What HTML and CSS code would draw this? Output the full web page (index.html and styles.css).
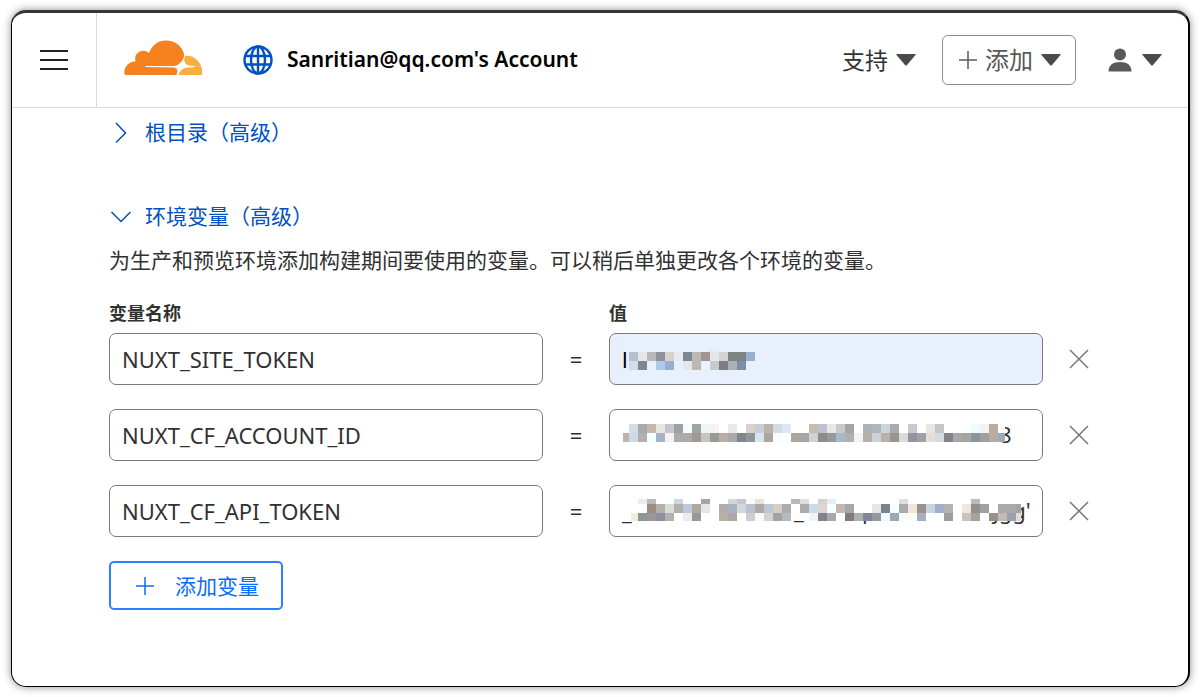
FILE: index.html
```html
<!DOCTYPE html>
<html lang="zh-CN">
<head>
<meta charset="utf-8">
<meta name="viewport" content="width=device-width, initial-scale=1">
<title>环境变量</title>
<link rel="stylesheet" href="styles.css">
</head>
<body>
<div class="window">
  <header class="topbar">
    <button class="menu-button" type="button" aria-label="菜单">
      <svg width="28" height="22" viewBox="0 0 28 22" stroke="#222" stroke-width="2"><path d="M0 2h28M0 11h28M0 20h28"/></svg>
    </button>
    <a class="logo" href="#" aria-label="Cloudflare">
      <svg width="78" height="36" viewBox="0 0 78 36">
        <path fill="#f6821f" d="M1 35C0 34 0 31 1 28.500C3 24 7 21.500 11.500 21.500C10.500 17 12 13.500 15 12C18 10 22 10.500 25 13C28 5 34 .500 42 .500C51 .500 58 6 60 14C60.500 17 59 20 57 22C55 24.500 53 25.500 50 26L21.500 26L21.500 27L50 27.500C53 28 54 30 53 33L52.500 35Z"/>
        <path fill="#fbad41" d="M61 16C69 14.500 76 21 78 29V35H55C55 31 59 28 64 27.500L71 27V26L65 25.500C62 25 61 23 60 20Z"/>
      </svg>
    </a>
    <a class="account" href="#">
      <svg width="30" height="30" viewBox="0 0 30 30" fill="none" stroke="#0051c3" stroke-width="2.400"><circle cx="15" cy="15" r="13.500"/><ellipse cx="15" cy="15" rx="7" ry="13.500"/><path d="M15 1.500v27M2 11h26M2 19.500h26"/></svg>
      <span>Sanritian@qq.com's Account</span>
    </a>
    <nav class="actions">
      <button class="plain-button" type="button"><span>支持</span><svg class="caret" width="20" height="12" viewBox="0 0 20 12"><path d="M1 0h18q1 0 .500 1L11 11q-1 1-2 0L.500 1Q0 0 1 0z"/></svg></button>
      <button class="add-button" type="button"><svg width="18" height="18" viewBox="0 0 18 18" stroke="#595959" stroke-width="1.500"><path d="M9 0v18M0 9h18"/></svg><span>添加</span><svg class="caret" width="20" height="12" viewBox="0 0 20 12"><path d="M1 0h18q1 0 .500 1L11 11q-1 1-2 0L.500 1Q0 0 1 0z"/></svg></button>
      <button class="user-button" type="button" aria-label="用户"><svg width="24" height="24" viewBox="0 0 24 24" fill="#595959"><circle cx="12" cy="6.500" r="6"/><path d="M.500 23.500C.500 17 5 14 12 14S23.500 17 23.500 23.500Z"/></svg><svg class="caret" width="20" height="12" viewBox="0 0 20 12"><path d="M1 0h18q1 0 .500 1L11 11q-1 1-2 0L.500 1Q0 0 1 0z"/></svg></button>
    </nav>
  </header>
  <main class="content">
    <button class="disclosure" type="button" aria-expanded="false">
      <svg width="24" height="24" viewBox="0 0 24 24" fill="none" stroke="#0051c3" stroke-width="1.500"><path d="M7 3l9.500 10L7 22.500"/></svg>
      <span>根目录（高级）</span>
    </button>
    <section>
      <button class="disclosure" type="button" aria-expanded="true">
        <svg width="24" height="24" viewBox="0 0 24 24" fill="none" stroke="#0051c3" stroke-width="1.500"><path d="M2.500 8l9.500 9.500 9.500-9.500"/></svg>
        <span>环境变量（高级）</span>
      </button>
      <p class="description">为生产和预览环境添加构建期间要使用的变量。可以稍后单独更改各个环境的变量。</p>
      <form class="variables">
        <div class="row labels">
          <label for="name-1">变量名称</label><span></span><label for="value-1">值</label>
        </div>
        <div class="row">
          <input class="field" id="name-1" value="NUXT_SITE_TOKEN">
          <span class="equals">=</span>
          <div class="value"><input class="field filled" id="value-1" value="l"><svg class="mosaic" data-row="0" viewBox="0 0 434 52"></svg></div>
          <button class="remove" type="button" aria-label="删除"><svg width="24" height="24" viewBox="0 0 24 24"><path d="M3 3l18 18M21 3L3 21"/></svg></button>
        </div>
        <div class="row">
          <input class="field" aria-label="变量名称" value="NUXT_CF_ACCOUNT_ID">
          <span class="equals">=</span>
          <div class="value"><input class="field" aria-label="值"><svg class="mosaic" data-row="1" viewBox="0 0 434 52"><text x="390" y="34">8</text></svg></div>
          <button class="remove" type="button" aria-label="删除"><svg width="24" height="24" viewBox="0 0 24 24"><path d="M3 3l18 18M21 3L3 21"/></svg></button>
        </div>
        <div class="row">
          <input class="field" aria-label="变量名称" value="NUXT_CF_API_TOKEN">
          <span class="equals">=</span>
          <div class="value"><input class="field" aria-label="值" value="_"><svg class="mosaic" data-row="2" viewBox="0 0 434 52"><text x="185" y="34">_</text><text x="253" y="34">p</text><text x="384" y="34">jgg'</text></svg></div>
          <button class="remove" type="button" aria-label="删除"><svg width="24" height="24" viewBox="0 0 24 24"><path d="M3 3l18 18M21 3L3 21"/></svg></button>
        </div>
        <button class="add-variable" type="button"><svg width="18" height="18" viewBox="0 0 18 18" stroke="#056dff" stroke-width="1.500"><path d="M9 0v18M0 9h18"/></svg><span>添加变量</span></button>
      </form>
    </section>
  </main>
</div>
<script src="mosaic.js"></script>
</body>
</html>
```
FILE: styles.css
```css
* { box-sizing: border-box; }
body {
  margin: 0;
  min-height: 100vh;
  padding: 10px 10px 10px 11px;
  display: flex;
  background: #fff;
  color: #313131;
  font-family: "Noto Sans", "Noto Sans CJK SC", sans-serif;
  font-size: 21px;
  line-height: 32px;
}
button, input { font: inherit; color: inherit; }
button { background: none; border: 0; padding: 0; cursor: pointer; }
a { color: inherit; text-decoration: none; }
svg { display: block; flex: none; }
.window {
  flex: 1;
  min-width: 0;
  border: 1px solid #000;
  border-top: 3px solid #34363d;
  border-right-width: 2px;
  border-radius: 15px;
  background: #fff;
  box-shadow: 0 0 9px rgba(0, 0, 0, .45);
  overflow: hidden;
}
.topbar {
  display: flex;
  align-items: center;
  height: 95px;
  border-bottom: 1px solid #d9d9d9;
}
.menu-button {
  display: flex;
  align-items: center;
  align-self: stretch;
  padding: 0 28px;
  border-right: 1px solid #d9d9d9;
}
.logo { margin: 0 41px 4px 27px; }
.account {
  display: flex;
  align-items: center;
  gap: 14px;
  color: #000;
  font-weight: 600;
  line-height: 28px;
}
.account span { padding-bottom: 2px; }
.actions {
  display: flex;
  align-items: center;
  gap: 26px;
  margin-left: auto;
  padding-right: 26px;
}
.plain-button, .add-button, .user-button { display: flex; align-items: center; gap: 8px; }
.plain-button { font-size: 23px; }
.add-button {
  height: 50px;
  padding: 0 14px 0 16px;
  border: 1px solid #8c8c8c;
  border-radius: 6px;
  color: #595959;
  font-size: 24px;
}
.user-button { padding-left: 6px; gap: 10px; }
.caret { fill: #4a4a4a; }
.content { padding: 8px 97px 48px; }
.disclosure {
  display: flex;
  align-items: center;
  gap: 12px;
  color: #0051c3;
}
section { margin-top: 52px; }
.description { margin: 12px 0 25px; }
.variables { display: flex; flex-direction: column; gap: 24px; }
.row {
  display: grid;
  grid-template-columns: minmax(0, 1fr) 66px minmax(0, 1fr) 48px;
  align-items: center;
}
.labels {
  margin-bottom: -16px;
  font-size: 18px;
  line-height: 24px;
  font-weight: 700;
}
.field {
  display: block;
  width: 100%;
  height: 52px;
  padding: 0 12px;
  border: 1px solid #797979;
  border-radius: 7px;
  background: #fff;
  font-size: 22px;
}
.filled { background: #e8f0fe; color: #000; }
.equals { text-align: center; font-size: 22px; }
.value { position: relative; }
.mosaic {
  position: absolute;
  top: 0;
  left: 0;
  width: 434px;
  height: 52px;
  pointer-events: none;
}
.mosaic text { fill: #313131; font-size: 22px; }
.remove { justify-self: end; }
.remove path { stroke: #777; stroke-width: 1.5; }
.add-variable {
  display: flex;
  align-items: center;
  align-self: flex-start;
  gap: 21px;
  height: 49px;
  padding: 0 22px 0 25px;
  border: 2px solid #2b80ff;
  border-radius: 5px;
  color: #056dff;
}
```
FILE: mosaic.js
```js
// Each strip is a run of 9px cells; "-" leaves a cell clear.
const strips = [
  [
    { x: 20, y: 19, h: 9, c: "b6c0c9 e5e8eb b8b8ba 8d919c dbd0ca e6ebf3 7c8796 bdb8b2 a0958f e2e7ec d4d4d4 7d8283 7d8283 98aeca" },
    { x: 20, y: 28, h: 9, c: "d0dde8 7f8591 - aecaea 98aec9 - e6e7eb bdb8b2 e9f2fd c8c9cd 7d7d88 adb0b5 7b8ea9" },
    { x: 100, y: 16, h: 3, c: "d5f2fc" }
  ],
  [
    { x: 20, y: 15, h: 9, c: "d5dde5 a9aaaa c8b6aa ebe5df c4c5cb 9f9fa4 f0fffe a2a4a3 eff5f6 f8f1ef - ebe7e4 - dbd1ca c8ced3 b8b4ad d3dae1 dde6f2 - - c4bbb5 bcc2ce e6e7eb c8caca a3a4a4 - aeb2b2 aeb5bc ccd5dd aaaaaa - c6cbd1 - ebe6e2 c4c6c9 - - - edfdff f3f3f3 b9ada3" },
    { x: 389, y: 15, h: 9, w: 7, c: "fff" },
    { x: 14, y: 24, h: 9, w: 6, c: "bfb4ac" },
    { x: 20, y: 24, h: 9, c: "ccdae8 b4b1ab f2ffff a5b4c6 f8f2ee aaabad aaaca9 a09995 c9c4be 989999 baaea4 a8a9aa 80828d 8f9599 d5e6ef aba59d f6fdff - aca69d a3a7ac d3d1cf 8b8c8e 989999 a8bac8 b1b0ac f1f4f7 b5b0aa c9d1d9 b8b1ab 999392 d9dada 93959e 9fa1a6 e5ddd6 d3dce5 81838d a8a9ab a5a6a4 8b969c 9fa0a3 b8aca5" },
    { x: 389, y: 24, h: 9, w: 7, c: "9aabbb" }
  ],
  [
    { x: 29, y: 14, h: 5, c: "e8edf0 b8babb - - ced5db - - a2a4a5 - - d3d5d7 c3c8d3 fcfaf4 e8e3dc - - - b7b9b9 dedfdf - d9d1cc e8edf1 - - - - - - - e3dfd8 - - - - - - fff b9bcbb fff fff fff" },
    { x: 38, y: 19, h: 9, c: "9b8b84 b7afaa dadcdb b0b1ab bfc8d6 aea8a2 e3e6ec - aeada7 a9b1c2 d2d7db b9c2d0 abaaa7 bfc8d3 d8cdc5 aaabaa - aaabaa ccdae9 ddd5cf f7fffe c1b8b2 a5a9af fff fff e3e6eb 7e828f f6ffff aaacab efe7df 9a908e c7d4e2 a0b0c8 b9b2ac - efe7dc 969088 9fa0a0 fff aaaba8 aaaba8" },
    { x: 407, y: 19, h: 9, w: 5, c: "a8a29e" },
    { x: 22, y: 28, h: 8, w: 7, c: "f3ecd8" },
    { x: 29, y: 28, h: 8, c: "8d9597 969796 8c929d b3b2ac fff e8ecf1 9c9592 - - b9afa8 aaa9a5 fffefa cbced2 fafaf7 d1d2d2 a2a3a3 b2bbc4 - - eff4f8 80838f a8aaa9 - 837b79 abb1af 7f8897 97989b effcff 9ba8b5 f5fdfb fbfbf4 a4b0c2 - - 9c9c9f - c8c3bb a8a19c fff 9a908b c1b9b5 9c9eaa" },
    { x: 407, y: 28, h: 8, w: 5, c: "e0dbd5" }
  ]
];

document.querySelectorAll(".mosaic").forEach(svg => {
  strips[svg.dataset.row].forEach(({ x, y, h, w = 9, c }) => {
    c.split(" ").forEach((color, i) => {
      if (color === "-") return;
      const rect = document.createElementNS("http://www.w3.org/2000/svg", "rect");
      rect.setAttribute("x", x + i * 9);
      rect.setAttribute("y", y);
      rect.setAttribute("width", w);
      rect.setAttribute("height", h);
      rect.setAttribute("fill", "#" + color);
      svg.append(rect);
    });
  });
});
```
